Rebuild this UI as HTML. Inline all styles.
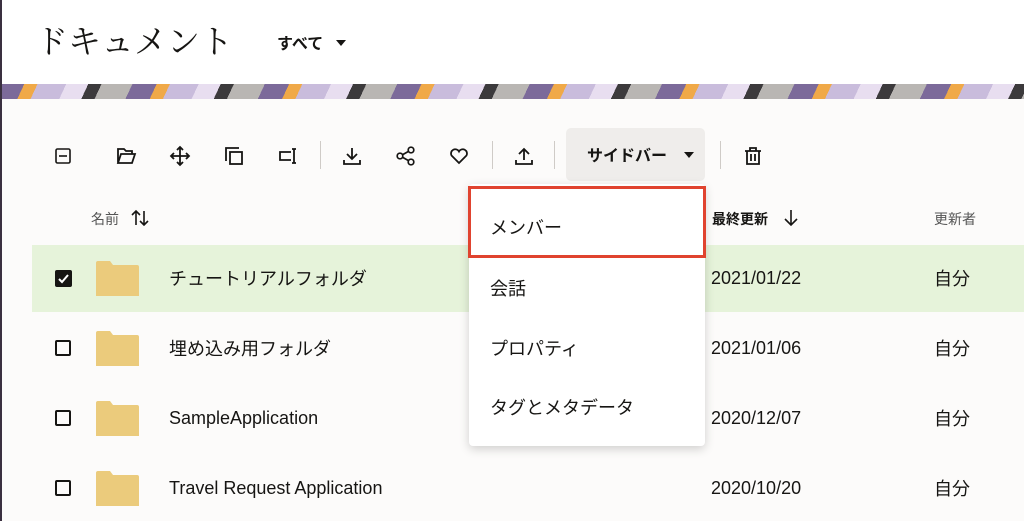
<!DOCTYPE html>
<html><head><meta charset="utf-8"><style>
*{margin:0;padding:0;box-sizing:border-box}
body{width:1024px;height:521px;overflow:hidden;background:#fcfbfa;font-family:"Liberation Sans","Noto Sans CJK JP",sans-serif;color:#161513;position:relative;line-height:1.2}
.abs{position:absolute}
.hdr{left:0;top:0;width:1024px;height:84px;background:#fff}
.edge{left:0;top:0;width:2px;height:521px;background:#3a3040}
.banner{left:0;top:84px;width:1024px;height:15px;background:repeating-linear-gradient(115deg,#7c6a9a 0 22px,#f0a948 22px 34px,#c9bcdc 34px 60px,#e8def0 60px 80px,#3c3a3c 80px 92px,#b9b6b3 92px 120px)}
.title{left:35px;top:24px;font-family:"Liberation Serif","Noto Serif CJK SC",serif;font-size:33px;letter-spacing:0}
.ic{position:absolute;top:145px;width:22px;height:22px}
.sep{position:absolute;top:141px;width:1px;height:28px;background:#cfcbc7}
.cb{position:absolute;left:55px;width:16px;height:16px;border:2px solid #161513;border-radius:2px}
.fold{position:absolute;left:96px;width:43px;height:35px}
.row{position:absolute;left:32px;width:992px;height:67px}
.t{position:absolute;font-size:18px}
.menu{left:469px;top:184px;width:236px;height:262px;background:#fff;border-radius:4px;box-shadow:0 3px 10px rgba(0,0,0,.18)}
.mi{position:absolute;left:21px;font-size:18px}
</style></head><body>
<div class="abs hdr"></div>
<div class="abs title">ドキュメント</div>
<div class="abs" style="left:277px;top:35px;font-size:16px;font-weight:bold">すべて</div>
<svg class="abs" style="left:335px;top:39px" width="12" height="8"><path d="M1 1h10L6 7z" fill="#161513"/></svg>
<div class="abs banner"></div>
<div class="abs edge"></div>

<svg class="ic" style="left:52px" viewBox="0 0 22 22" fill="none" stroke="#161513" stroke-width="1.6"><rect x="4" y="4" width="14" height="14" rx="1.5"/><path d="M7 11h8"/></svg>
<svg class="ic" style="left:115px" viewBox="0 0 22 22" fill="none" stroke="#161513" stroke-width="1.8"><path d="M3 18V4h6l2 2h6v3M3 18l3-9h14l-3 9z"/></svg>
<svg class="ic" style="left:169px" viewBox="0 0 22 22" fill="none" stroke="#161513" stroke-width="1.8"><path d="M11 2v18M2 11h18M8 5l3-3 3 3M8 17l3 3 3-3M5 8l-3 3 3 3M17 8l3 3-3 3"/></svg>
<svg class="ic" style="left:223px" viewBox="0 0 22 22" fill="none" stroke="#161513" stroke-width="1.8"><path d="M3 16V3h13"/><rect x="7" y="7" width="12" height="12"/></svg>
<svg class="ic" style="left:277px" viewBox="0 0 22 22" fill="none" stroke="#161513" stroke-width="1.8"><path d="M14 7H3v8h11M17 4v14M15 4h4M15 18h4"/></svg>
<div class="sep" style="left:320px"></div>
<svg class="ic" style="left:341px" viewBox="0 0 22 22" fill="none" stroke="#161513" stroke-width="1.8"><path d="M11 3v11M6 9l5 5 5-5M3 15v4h16v-4"/></svg>
<svg class="ic" style="left:395px" viewBox="0 0 22 22" fill="none" stroke="#161513" stroke-width="1.7"><circle cx="5" cy="11" r="2.8"/><circle cx="16" cy="5" r="2.8"/><circle cx="16" cy="17" r="2.8"/><path d="M7.5 9.7l6-3.3M7.5 12.3l6 3.3"/></svg>
<svg class="ic" style="left:448px" viewBox="0 0 22 22" fill="none" stroke="#161513" stroke-width="1.8"><path d="M11 18L3.5 10.5a4 4 0 0 1 7.5-4 4 4 0 0 1 7.5 4z"/></svg>
<div class="sep" style="left:492px"></div>
<svg class="ic" style="left:513px" viewBox="0 0 22 22" fill="none" stroke="#161513" stroke-width="1.8"><path d="M11 15V4M6 9l5-5 5 5M3 15v4h16v-4"/></svg>
<div class="sep" style="left:554px"></div>
<div class="abs" style="left:566px;top:128px;width:139px;height:53px;background:#efedeb;border-radius:5px"></div>
<div class="abs" style="left:587px;top:147px;font-size:16px;font-weight:bold">サイドバー</div>
<svg class="abs" style="left:683px;top:151px" width="12" height="8"><path d="M1 1h10L6 7z" fill="#161513"/></svg>
<div class="sep" style="left:720px"></div>
<svg class="ic" style="left:742px" viewBox="0 0 22 22" fill="none" stroke="#161513" stroke-width="1.8"><path d="M3 6h16M8 6V3h6v3M5 6v13h12V6M9 9v7M13 9v7"/></svg>

<div class="abs" style="left:91px;top:211px;font-size:14px;color:#555">名前</div>
<svg class="abs" style="left:131px;top:209px" width="18" height="18" fill="none" stroke="#161513" stroke-width="1.6"><path d="M5 16V2M1 6l4-4 4 4M13 2v14M9 12l4 4 4-4"/></svg>
<div class="abs" style="left:712px;top:211px;font-size:14px;font-weight:bold">最終更新</div>
<svg class="abs" style="left:783px;top:209px" width="16" height="18" fill="none" stroke="#161513" stroke-width="1.6"><path d="M8 1v15M2 10l6 6 6-6"/></svg>
<div class="abs" style="left:934px;top:211px;font-size:14px;color:#555">更新者</div>

<div class="row" style="top:245px;background:#e6f3da"></div>
<svg class="abs" style="left:55px;top:270px" width="17" height="17"><rect width="17" height="17" rx="2" fill="#161513"/><path d="M4 9l3 3 6-7" stroke="#fff" stroke-width="2" fill="none"/></svg>
<div class="cb" style="top:340px"></div>
<div class="cb" style="top:410px"></div>
<div class="cb" style="top:480px"></div>

<svg class="fold" style="top:261px" viewBox="0 0 43 35"><path d="M0 2a2 2 0 0 1 2-2h12l3 4h24a2 2 0 0 1 2 2v29H0z" fill="#ebcb7c"/></svg>
<svg class="fold" style="top:331px" viewBox="0 0 43 35"><path d="M0 2a2 2 0 0 1 2-2h12l3 4h24a2 2 0 0 1 2 2v29H0z" fill="#ebcb7c"/></svg>
<svg class="fold" style="top:401px" viewBox="0 0 43 35"><path d="M0 2a2 2 0 0 1 2-2h12l3 4h24a2 2 0 0 1 2 2v29H0z" fill="#ebcb7c"/></svg>
<svg class="fold" style="top:471px" viewBox="0 0 43 35"><path d="M0 2a2 2 0 0 1 2-2h12l3 4h24a2 2 0 0 1 2 2v29H0z" fill="#ebcb7c"/></svg>

<div class="t" style="left:169px;top:269px">チュートリアルフォルダ</div>
<div class="t" style="left:169px;top:339px">埋め込み用フォルダ</div>
<div class="t" style="left:169px;top:408px">SampleApplication</div>
<div class="t" style="left:169px;top:478px">Travel Request Application</div>
<div class="t" style="left:711px;top:268px">2021/01/22</div>
<div class="t" style="left:711px;top:338px">2021/01/06</div>
<div class="t" style="left:711px;top:408px">2020/12/07</div>
<div class="t" style="left:711px;top:478px">2020/10/20</div>
<div class="t" style="left:934px;top:269px">自分</div>
<div class="t" style="left:934px;top:339px">自分</div>
<div class="t" style="left:934px;top:409px">自分</div>
<div class="t" style="left:934px;top:479px">自分</div>

<div class="abs menu">
<div class="mi" style="top:34px">メンバー</div>
<div class="mi" style="top:95px">会話</div>
<div class="mi" style="top:155px">プロパティ</div>
<div class="mi" style="top:214px">タグとメタデータ</div>
</div>
<div class="abs" style="left:468px;top:186px;width:238px;height:72px;border:3px solid #e0432f"></div>
</body></html>
